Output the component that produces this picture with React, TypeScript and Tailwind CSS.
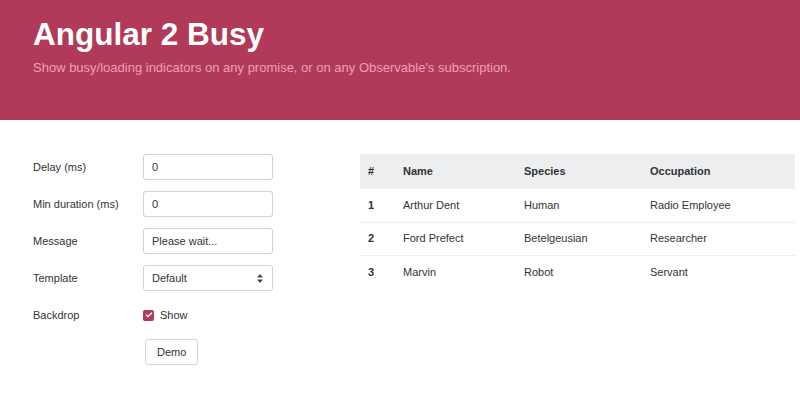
import { Check } from 'lucide-react'

const people = [
  { id: 1, name: 'Arthur Dent', species: 'Human', occupation: 'Radio Employee' },
  { id: 2, name: 'Ford Prefect', species: 'Betelgeusian', occupation: 'Researcher' },
  { id: 3, name: 'Marvin', species: 'Robot', occupation: 'Servant' },
]

const inputCls =
  'h-[26px] w-[130px] rounded-[3px] border border-[#d4d4d4] bg-white px-[8px] text-[11px] text-[#333] outline-none'

function Field({ label, children }: { label: string; children: React.ReactNode }) {
  return (
    <div className="flex h-[26px] items-center">
      <label className="w-[110px] text-[11px] text-[#333]">{label}</label>
      {children}
    </div>
  )
}

export default function App() {
  return (
    <div className="min-h-[419px] bg-white" style={{ fontFamily: '"Liberation Sans", Arial, sans-serif' }}>
      <header className="h-[120px] bg-[#b03a58] px-[33px] pt-[14px]">
        <h1 className="text-[31.5px] font-bold leading-[40px] text-white">Angular 2 Busy</h1>
        <p className="mt-[5px] text-[13px] leading-[18px] text-[#eea0b4]">
          Show busy/loading indicators on any promise, or on any Observable's subscription.
        </p>
      </header>

      <main className="flex pl-[33px] pt-[34px]">
        <div className="flex w-[327px] flex-col gap-[11px]">
          <Field label="Delay (ms)">
            <input className={inputCls} defaultValue="0" />
          </Field>
          <Field label="Min duration (ms)">
            <input className={inputCls} defaultValue="0" />
          </Field>
          <Field label="Message">
            <input className={inputCls} defaultValue="Please wait..." />
          </Field>
          <Field label="Template">
            <div className={`${inputCls} flex items-center justify-between`}>
              <span>Default</span>
              <svg width="6" height="9" viewBox="0 0 6 9" className="mr-[1px]">
                <path d="M3 0 L6 3.5 H0 Z M3 9 L6 5.5 H0 Z" fill="#444" />
              </svg>
            </div>
          </Field>
          <div className="flex h-[26px] items-center">
            <span className="w-[110px] text-[11px] text-[#333]">Backdrop</span>
            <span className="flex items-center gap-[6px] text-[11px] text-[#333]">
              <span className="flex h-[11px] w-[11px] items-center justify-center rounded-[2px] bg-[#b03a58]">
                <Check className="h-[8px] w-[8px] text-white" strokeWidth={4} />
              </span>
              Show
            </span>
          </div>
          <div className="pl-[112px]">
            <button className="h-[26px] rounded-[3px] border border-[#d4d4d4] bg-white px-[11px] text-[11px] text-[#333]">
              Demo
            </button>
          </div>
        </div>

        <table className="h-fit w-[435px] border-collapse text-left text-[11px] text-[#333]">
          <thead>
            <tr className="h-[35px] bg-[#eceeef]">
              <th className="w-[35px] pl-[8px] font-bold">#</th>
              <th className="w-[121px] pl-[8px] font-bold">Name</th>
              <th className="w-[126px] pl-[8px] font-bold">Species</th>
              <th className="pl-[8px] font-bold">Occupation</th>
            </tr>
          </thead>
          <tbody>
            {people.map((p, i) => (
              <tr key={p.id} className={`h-[33px] ${i < people.length - 1 ? 'border-b border-[#eceeef]' : ''}`}>
                <td className="pl-[8px] font-bold">{p.id}</td>
                <td className="pl-[8px]">{p.name}</td>
                <td className="pl-[8px]">{p.species}</td>
                <td className="pl-[8px]">{p.occupation}</td>
              </tr>
            ))}
          </tbody>
        </table>
      </main>
    </div>
  )
}
